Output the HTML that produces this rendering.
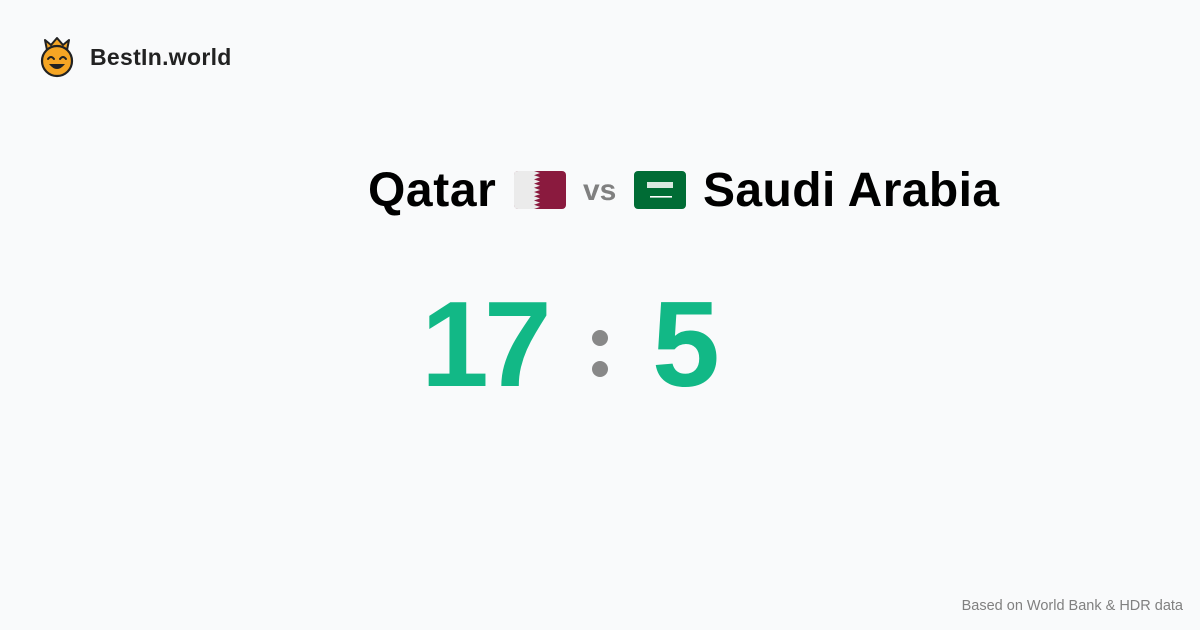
<!DOCTYPE html>
<html><head><meta charset="utf-8"><style>
body{margin:0;width:1200px;height:630px;background:#f9fafb;font-family:"Liberation Sans",sans-serif;position:relative;overflow:hidden}
.abs{position:absolute;white-space:nowrap}
</style></head><body>
<svg class="abs" style="left:38px;top:36px" width="38" height="42" viewBox="0 0 38 42">
<path d="M9 14 L7 4 L13 9 L19 2 L25 9 L31 4 L29 14 Z" fill="#f5a524" stroke="#222" stroke-width="2" stroke-linejoin="round"/>
<circle cx="19" cy="25" r="15" fill="#f5a524" stroke="#222" stroke-width="2.2"/>
<path d="M10 23 q3 -4 6 0 M22 23 q3 -4 6 0" fill="none" stroke="#222" stroke-width="2" stroke-linecap="round"/>
<path d="M11 28 q8 10 16 0 Z" fill="#222"/>
</svg>
<div class="abs" style="left:90px;top:44px;font-size:23px;font-weight:bold;color:#222;letter-spacing:0.3px">BestIn.world</div>
<div class="abs" style="left:368px;top:163px;font-size:48px;font-weight:bold;color:#000;letter-spacing:0.6px">Qatar</div>
<svg class="abs" style="left:514px;top:171px" width="52" height="38">
<rect width="52" height="38" rx="4" fill="#8a1a3e"/>
<path d="M4 0 H20 L26 2 L20 4.2 L26 6.3 L20 8.4 L26 10.5 L20 12.6 L26 14.7 L20 16.8 L26 19 L20 21 L26 23.2 L20 25.3 L26 27.4 L20 29.5 L26 31.6 L20 33.8 L26 35.9 L20 38 H4 Q0 38 0 34 V4 Q0 0 4 0Z" fill="#ebebeb"/>
</svg>
<div class="abs" style="left:583px;top:174px;font-size:30px;font-weight:bold;color:#808080">vs</div>
<svg class="abs" style="left:634px;top:171px" width="52" height="38">
<rect width="52" height="38" rx="4" fill="#006c35"/>
<rect x="13" y="11" width="26" height="6" fill="#fff" opacity=".85"/>
<rect x="16" y="25" width="22" height="1.6" fill="#fff"/>
</svg>
<div class="abs" style="left:703px;top:163px;font-size:48px;font-weight:bold;color:#000;letter-spacing:0.4px">Saudi Arabia</div>
<div class="abs" style="left:421px;top:274px;font-size:122px;font-weight:bold;color:#12b886;letter-spacing:-5px">17</div>
<div class="abs" style="left:592px;top:330px;width:16px;height:16px;border-radius:50%;background:#888"></div>
<div class="abs" style="left:592px;top:361px;width:16px;height:16px;border-radius:50%;background:#888"></div>
<div class="abs" style="left:652px;top:274px;font-size:122px;font-weight:bold;color:#12b886">5</div>
<div class="abs" style="right:17px;top:598px;font-size:14.5px;color:#808080">Based on World Bank &amp; HDR data</div>
</body></html>
